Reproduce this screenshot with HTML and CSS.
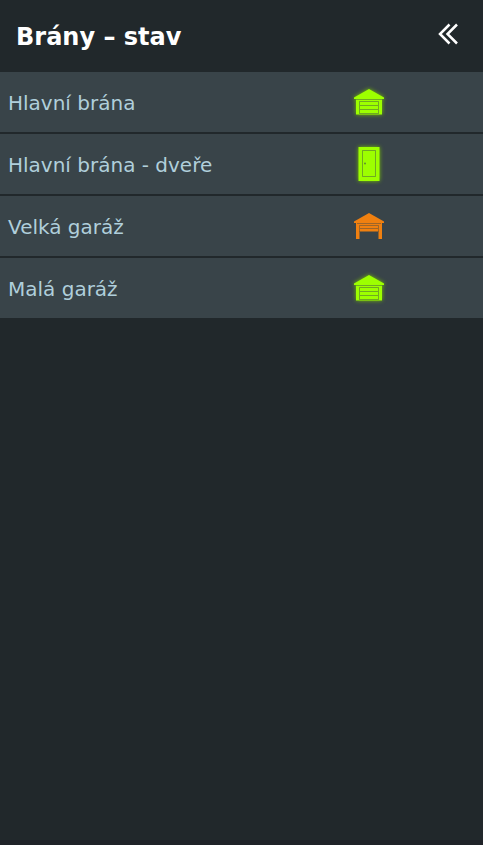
FILE: index.html
```html
<!DOCTYPE html>
<html lang="cs">
<head>
<meta charset="utf-8">
<meta name="viewport" content="width=device-width, initial-scale=1">
<title>Brány – stav</title>
<link rel="stylesheet" href="styles.css">
</head>
<body>
<svg class="symbols" aria-hidden="true">
  <symbol id="garage-closed" viewBox="0 0 30 28">
    <path d="M15 1 30 9.500v1.500H0V9.500z"/>
    <path d="M2 11h26v15.500H2z"/>
    <path class="detail" d="M2 11.500h26M5.500 26V13.500h19V26M6 17.500h18M6 21.500h18M6 25.500h18"/>
  </symbol>
  <symbol id="garage-open" viewBox="0 0 30 28">
    <path d="M15 1 30 9.500v1.500H0V9.500z"/>
    <path d="M2 11h26v16h-3.500v-7.500h-19v7.500H2z"/>
    <path class="detail" d="M3 11.500h24M5.500 20v-6.500h19V20M6 16.500h18"/>
  </symbol>
  <symbol id="door" viewBox="0 0 30 36">
    <path d="M4.500 1h21v34h-21z"/>
    <path class="detail" d="M8.500 4.500h13v26h-13z"/>
    <circle class="knob" cx="11" cy="17.500" r="1"/>
  </symbol>
</svg>
<header class="header">
  <h1 class="title">Brány – stav</h1>
  <button class="back" type="button" aria-label="Zpět">
    <svg class="back-icon" viewBox="0 0 22 22"><path d="M12.500 1.500 3 11l9.500 9.500M20 1.500 10.500 11l9.500 9.500"/></svg>
  </button>
</header>
<main class="content">
  <ul class="list">
    <li class="row"><span>Hlavní brána</span><svg class="icon closed" viewBox="0 0 30 28" role="img" aria-label="Zavřeno"><use href="#garage-closed"/></svg></li>
    <li class="row"><span>Hlavní brána - dveře</span><svg class="icon door closed" viewBox="0 0 30 36" role="img" aria-label="Zavřeno"><use href="#door"/></svg></li>
    <li class="row"><span>Velká garáž</span><svg class="icon open" viewBox="0 0 30 28" role="img" aria-label="Otevřeno"><use href="#garage-open"/></svg></li>
    <li class="row"><span>Malá garáž</span><svg class="icon closed" viewBox="0 0 30 28" role="img" aria-label="Zavřeno"><use href="#garage-closed"/></svg></li>
  </ul>
</main>
<footer class="footer"></footer>
</body>
</html>
```
FILE: styles.css
```css
* { box-sizing: border-box; }

body {
  display: flex;
  flex-direction: column;
  min-height: 100vh;
  margin: 0;
  background: #21282b;
  color: #b0cfdb;
  font: 20px/24px Verdana, "DejaVu Sans", sans-serif;
}

.symbols {
  position: absolute;
  width: 0;
  height: 0;
}

.header {
  display: flex;
  align-items: center;
  justify-content: space-between;
  height: 72px;
  padding: 0 24px 0 16px;
}

.title {
  margin: 0;
  padding-top: 2px;
  color: #fff;
  font-size: 24px;
  line-height: 32px;
}

.back {
  display: flex;
  padding: 0 0 4px;
  border: 0;
  background: none;
  color: #fff;
  cursor: pointer;
}

.back-icon {
  width: 22px;
  height: 22px;
  fill: none;
  stroke: currentColor;
  stroke-width: 2.5;
}

.content { flex: 1; }

.list {
  display: grid;
  gap: 2px;
  margin: 0;
  padding: 0;
  list-style: none;
}

.row {
  display: grid;
  grid-template-columns: 1fr 47%;
  align-items: center;
  height: 60px;
  padding-right: 1px;
  background: #394449;
}

.row span {
  padding-top: 2px;
  padding-left: 8px;
}

.icon {
  justify-self: center;
  width: 30px;
  height: 28px;
  fill: currentColor;
}

.door { height: 36px; }

.closed {
  color: #9dff00;
  filter: drop-shadow(0 0 2px #79c400);
}

.open { color: #f08010; }

.detail {
  fill: none;
  stroke: #394449;
  stroke-opacity: 0.45;
}

.knob {
  fill: #394449;
  fill-opacity: 0.6;
}

.footer {
  height: 5px;
  background: #1f2228;
}
```
